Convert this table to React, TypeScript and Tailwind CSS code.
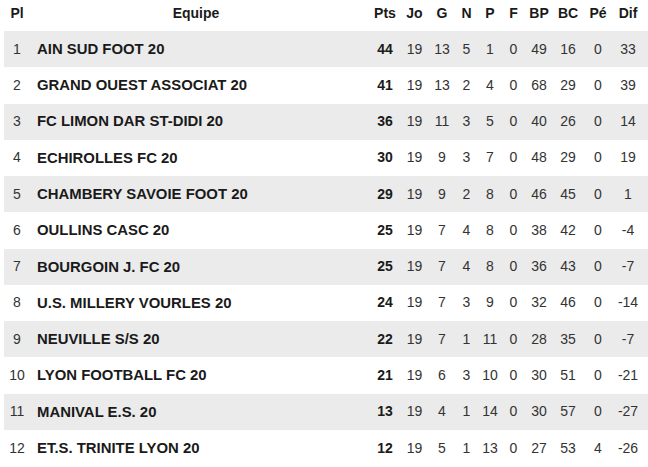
const rows: [number, string, number, number, number, number, number, number, number, number, number, number][] = [
  [1, "AIN SUD FOOT 20", 44, 19, 13, 5, 1, 0, 49, 16, 0, 33],
  [2, "GRAND OUEST ASSOCIAT 20", 41, 19, 13, 2, 4, 0, 68, 29, 0, 39],
  [3, "FC LIMON DAR ST-DIDI 20", 36, 19, 11, 3, 5, 0, 40, 26, 0, 14],
  [4, "ECHIROLLES FC 20", 30, 19, 9, 3, 7, 0, 48, 29, 0, 19],
  [5, "CHAMBERY SAVOIE FOOT 20", 29, 19, 9, 2, 8, 0, 46, 45, 0, 1],
  [6, "OULLINS CASC 20", 25, 19, 7, 4, 8, 0, 38, 42, 0, -4],
  [7, "BOURGOIN J. FC 20", 25, 19, 7, 4, 8, 0, 36, 43, 0, -7],
  [8, "U.S. MILLERY VOURLES 20", 24, 19, 7, 3, 9, 0, 32, 46, 0, -14],
  [9, "NEUVILLE S/S 20", 22, 19, 7, 1, 11, 0, 28, 35, 0, -7],
  [10, "LYON FOOTBALL FC 20", 21, 19, 6, 3, 10, 0, 30, 51, 0, -21],
  [11, "MANIVAL E.S. 20", 13, 19, 4, 1, 14, 0, 30, 57, 0, -27],
  [12, "ET.S. TRINITE LYON 20", 12, 19, 5, 1, 13, 0, 27, 53, 4, -26],
];

// widths of the stat columns, Pts .. Dif
const statW = ["w-[30px]", "w-[29px]", "w-[26px]", "w-[23px]", "w-[24px]", "w-[23px]", "w-[28px]", "w-[30px]", "w-[30px]", "w-[30px]"];
const heads = ["Pts", "Jo", "G", "N", "P", "F", "BP", "BC", "Pé", "Dif"];

export default function App() {
  return (
    <div className="w-[648px] h-[467px] bg-white pl-[4px] text-[14px] text-[#333] font-['Liberation_Sans',Arial,sans-serif] overflow-hidden">
      <div className="flex h-[31px] items-center pb-[5px] font-bold text-[#1a1a1a]">
        <div className="w-[26px] flex justify-center">Pl</div>
        <div className="w-[340px] flex justify-center pr-[8px]">Equipe</div>
        {heads.map((h, i) => (
          <div key={h} className={`${statW[i]} flex justify-center`}>
            {h}
          </div>
        ))}
      </div>
      {rows.map(([pl, team, ...stats], r) => (
        <div
          key={pl}
          className={`flex h-[36.27px] items-center ${r % 2 === 0 ? "bg-[#ebebeb]" : "bg-white"}`}
        >
          <div className="w-[26px] flex justify-center">{pl}</div>
          <div className="w-[340px] pl-[7px] text-[14.9px] font-bold text-[#1a1a1a] whitespace-nowrap">{team}</div>
          {stats.map((v, i) => (
            <div
              key={i}
              className={`${statW[i]} flex justify-center ${i === 0 ? "font-bold text-[#1a1a1a]" : ""}`}
            >
              {v}
            </div>
          ))}
        </div>
      ))}
    </div>
  );
}
